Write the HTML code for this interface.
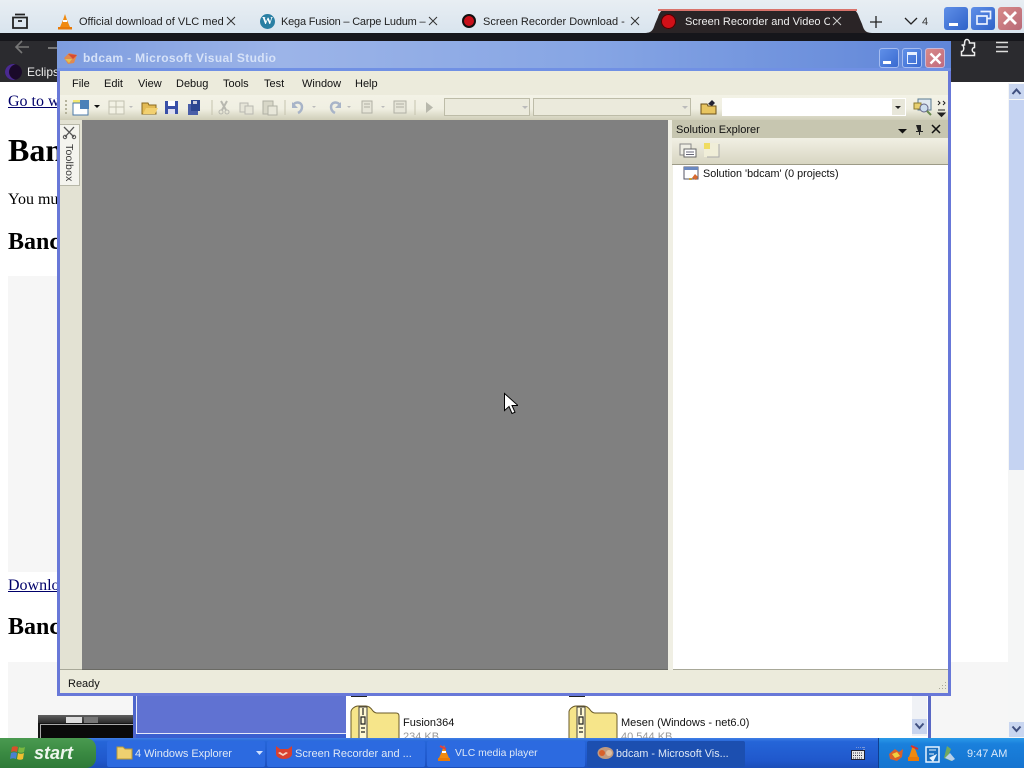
<!DOCTYPE html>
<html><head><meta charset="utf-8"><style>
html,body{margin:0;padding:0;background:#fff;}
#r{position:relative;width:1024px;height:768px;overflow:hidden;background:#fff;font-family:"Liberation Sans",sans-serif;}
.a{position:absolute;}
.t{position:absolute;white-space:nowrap;}
.s{font-family:"Liberation Serif",serif;color:#000;}
.tab{font-size:11px;color:#222;top:16px;overflow:hidden;width:145px;}
.m{font-size:11px;color:#111;top:78px;}
.tb{font-size:11px;color:#dfe8f5;top:748px;}
.x{position:absolute;}
</style></head><body><div id="r">

<!-- browser tab strip -->
<div class="a" style="left:0;top:0;width:1024px;height:33px;background:linear-gradient(#e8eef3,#d9e4ee);"></div>
<svg class="x" style="left:11px;top:12px" width="18" height="18" viewBox="0 0 18 18"><path d="M2 5.500h14v10.500H2zM4 2.500h10M7 9h4" fill="none" stroke="#222" stroke-width="1.800"/></svg>
<svg class="x" style="left:57px;top:13px" width="16" height="17" viewBox="0 0 16 17"><path d="M8 1l2 6 3 7H3l3-7z" fill="#f08a10"/><path d="M6 7h4v2H6z" fill="#fff"/><path d="M1 14h14v2.500H1z" fill="#e87a08"/></svg>
<div class="t tab" style="left:79px">Official download of VLC med</div>
<svg class="x" style="left:226px;top:16px" width="10" height="10"><path d="M1 1l8 8M9 1l-8 8" stroke="#333" stroke-width="1"/></svg>
<div class="a" style="left:260px;top:14px;width:15px;height:15px;border-radius:50%;background:#2a7fa3;color:#fff;font:bold 11px/15px 'Liberation Serif',serif;text-align:center;">W</div>
<div class="t tab" style="left:281px;letter-spacing:-.2px">Kega Fusion – Carpe Ludum –</div>
<svg class="x" style="left:428px;top:16px" width="10" height="10"><path d="M1 1l8 8M9 1l-8 8" stroke="#333" stroke-width="1"/></svg>
<div class="a" style="left:462px;top:14px;width:14px;height:14px;border-radius:50%;background:#c8101a;border:2px solid #111;box-sizing:border-box;"></div>
<div class="t tab" style="left:483px">Screen Recorder Download - E</div>
<svg class="x" style="left:630px;top:16px" width="10" height="10"><path d="M1 1l8 8M9 1l-8 8" stroke="#333" stroke-width="1"/></svg>

<!-- active tab -->
<svg class="x" style="left:644px;top:8px" width="228" height="26"><path d="M0 25c8 0 9-3 11-9l3-7c1-3 3-8 8-8h185c5 0 7 5 8 8l3 7c2 6 3 9 11 9z" fill="#2a2426"/><path d="M14 2h199" stroke="#d9736b" stroke-width="2"/></svg>
<div class="a" style="left:661px;top:14px;width:15px;height:15px;border-radius:50%;background:#d01018;box-shadow:inset 0 0 0 1px #400;"></div>
<div class="t" style="left:685px;top:16px;font-size:11px;color:#eee;width:145px;overflow:hidden;">Screen Recorder and Video Capture</div>
<svg class="x" style="left:832px;top:16px" width="10" height="10"><path d="M1 1l8 8M9 1l-8 8" stroke="#ccc" stroke-width="1"/></svg>
<svg class="x" style="left:869px;top:15px" width="14" height="14"><path d="M7 1v12M1 7h12" stroke="#222" stroke-width="1.300"/></svg>
<svg class="x" style="left:904px;top:16px" width="14" height="10"><path d="M1 2l6 6 6-6" fill="none" stroke="#222" stroke-width="1.300"/></svg>
<div class="t" style="left:922px;top:16px;font-size:11px;color:#333;">4</div>

<!-- outer window controls -->
<div class="a" style="left:944px;top:7px;width:24px;height:23px;background:linear-gradient(135deg,#5f8fe8,#2f62c8);border-radius:3px;"></div>
<div class="a" style="left:949px;top:23px;width:9px;height:3px;background:#fff;"></div>
<div class="a" style="left:971px;top:7px;width:24px;height:23px;background:linear-gradient(135deg,#5f8fe8,#2f62c8);border-radius:3px;"></div>
<svg class="x" style="left:975px;top:10px" width="17" height="16"><path d="M5.500 1.500h10v7h-3M2 6h10v8H2z" fill="none" stroke="#e8f0ff" stroke-width="1.700"/></svg>
<div class="a" style="left:998px;top:7px;width:24px;height:23px;background:linear-gradient(135deg,#d88a88,#b86a78);border-radius:3px;"></div>
<svg class="x" style="left:1002px;top:10px" width="16" height="16"><path d="M2 2l12 12M14 2L2 14" stroke="#fff" stroke-width="2.800"/></svg>

<!-- browser toolbar -->
<div class="a" style="left:0;top:33px;width:1024px;height:9px;background:#16161b;"></div>
<div class="a" style="left:0;top:41px;width:1024px;height:41px;background:#2b2b2f;"></div>
<svg class="x" style="left:14px;top:39px" width="16" height="16"><path d="M15 8H2M8 2L2 8l6 6" fill="none" stroke="#777" stroke-width="1.600"/></svg>
<div class="a" style="left:48px;top:47px;width:9px;height:2px;background:#777;"></div>
<div class="a" style="left:5px;top:64px;width:17px;height:16px;border-radius:50%;background:#1a0a2a;box-shadow:inset 4px 0 0 #4a2a90;"></div>
<div class="t" style="left:27px;top:65px;font-size:12px;color:#eee;">Eclips</div>
<svg class="x" style="left:960px;top:38px" width="17" height="19"><path d="M1.500 7h3c0-5 1-5.500 2.500-5.500S9.500 3 9.500 5h5v4.500c-3 0-3 5 0 5v3H1.500v-4c3 0 3-6.500 0-6.500z" fill="none" stroke="#eee" stroke-width="1.500"/></svg>
<svg class="x" style="left:995px;top:41px" width="14" height="12"><path d="M1 1.500h12M1 6h12M1 10.500h12" stroke="#ddd" stroke-width="1.400"/></svg>

<!-- page content -->
<div class="t s" style="left:8px;top:93px;font-size:16px;text-decoration:underline;color:#00006a;">Go to w</div>
<div class="t s" style="left:8px;top:132px;font-size:32px;font-weight:bold;">Ban</div>
<div class="t s" style="left:8px;top:191px;font-size:16px;">You mu</div>
<div class="t s" style="left:8px;top:229px;font-size:24px;font-weight:bold;">Banc</div>
<div class="a" style="left:8px;top:276px;width:50px;height:296px;background:#f6f6f6;"></div>
<div class="t s" style="left:8px;top:577px;font-size:16px;text-decoration:underline;color:#00006a;">Downlo</div>
<div class="t s" style="left:8px;top:614px;font-size:24px;font-weight:bold;">Banc</div>
<div class="a" style="left:8px;top:662px;width:1000px;height:78px;background:#f6f6f6;"></div>

<!-- thumbnail -->
<div class="a" style="left:38px;top:715px;width:95px;height:26px;background:#151515;"></div>
<div class="a" style="left:38px;top:715px;width:95px;height:8px;background:linear-gradient(#606060,#2a2a2a);"></div>
<div class="a" style="left:66px;top:717px;width:16px;height:6px;background:#ddd;"></div>
<div class="a" style="left:84px;top:717px;width:14px;height:6px;background:#777;"></div>
<div class="a" style="left:40px;top:724px;width:93px;height:16px;background:#0a0a0a;border-left:1px solid #aaa;border-top:1px solid #aaa;"></div>

<!-- explorer window behind -->
<div class="a" style="left:133px;top:696px;width:3px;height:45px;background:#4e66cc;"></div>
<div class="a" style="left:136px;top:696px;width:210px;height:37px;background:#6072d2;border-bottom:1px solid #e6e9fa;border-left:1px solid #e6e9fa;box-sizing:content-box;"></div>
<div class="a" style="left:136px;top:734px;width:210px;height:7px;background:#3a5fd0;"></div>
<div class="a" style="left:346px;top:696px;width:584px;height:45px;background:#fff;"></div>
<div class="a" style="left:912px;top:696px;width:15px;height:40px;background:#f0f2f6;"></div>
<div class="a" style="left:912px;top:719px;width:15px;height:15px;background:#c8d4ee;"></div>
<svg class="x" style="left:914px;top:722px" width="11" height="9"><path d="M1.500 1.500L5.500 6l4-4.500" fill="none" stroke="#405080" stroke-width="2"/></svg>
<div class="a" style="left:928px;top:696px;width:3px;height:45px;background:#5a68c4;"></div>
<div class="a" style="left:351px;top:696px;width:16px;height:1px;background:#222;"></div>
<div class="a" style="left:569px;top:696px;width:16px;height:1px;background:#222;"></div>

<!-- folders -->
<svg class="x" style="left:350px;top:705px" width="50" height="34"><path d="M1 34V7c0-3 4-6 7-6h8c3 0 5 2 7 5 1 1 2 2 4 2h19c2 0 3 1 3 3v23z" fill="#f6e58a" stroke="#6a5a28"/><path d="M9 2h8v32H9z" fill="#fff8d0" stroke="#444" stroke-width="1"/><path d="M13 3v7M11 12h4v7h-4zM11 23h4M11 27h4" fill="none" stroke="#222" stroke-width="1.200"/></svg>
<svg class="x" style="left:568px;top:705px" width="50" height="34"><path d="M1 34V7c0-3 4-6 7-6h8c3 0 5 2 7 5 1 1 2 2 4 2h19c2 0 3 1 3 3v23z" fill="#f6e58a" stroke="#6a5a28"/><path d="M9 2h8v32H9z" fill="#fff8d0" stroke="#444" stroke-width="1"/><path d="M13 3v7M11 12h4v7h-4zM11 23h4M11 27h4" fill="none" stroke="#222" stroke-width="1.200"/></svg>
<div class="t" style="left:403px;top:717px;font-size:11px;color:#111;">Fusion364</div>
<div class="t" style="left:403px;top:731px;font-size:11px;color:#999;">234 KB</div>
<div class="t" style="left:621px;top:717px;font-size:11px;color:#111;">Mesen (Windows - net6.0)</div>
<div class="t" style="left:621px;top:731px;font-size:11px;color:#999;">40,544 KB</div>

<!-- browser scrollbar -->
<div class="a" style="left:1008px;top:83px;width:16px;height:657px;background:#f5f6f6;"></div>
<div class="a" style="left:1009px;top:84px;width:15px;height:15px;background:#c9d6f0;"></div>
<svg class="x" style="left:1011px;top:87px" width="11" height="9"><path d="M1.500 7L5.500 2.500 9.500 7" fill="none" stroke="#405080" stroke-width="2"/></svg>
<div class="a" style="left:1009px;top:100px;width:15px;height:370px;background:#c5d3f2;"></div>
<div class="a" style="left:1009px;top:722px;width:15px;height:15px;background:#c9d6f0;"></div>
<svg class="x" style="left:1011px;top:725px" width="11" height="9"><path d="M1.500 1.500L5.500 6l4-4.500" fill="none" stroke="#405080" stroke-width="2"/></svg>

<!-- VS window -->
<div class="a" style="left:57px;top:41px;width:894px;height:655px;background:#6878d8;"></div>
<div class="a" style="left:57px;top:41px;width:894px;height:30px;background:linear-gradient(90deg,#7d9cdf 0%,#9cb4e8 25%,#86a5e4 60%,#5f85d8 100%);"></div>
<div class="a" style="left:57px;top:68px;width:894px;height:3px;background:#7090e4;"></div>
<svg class="x" style="left:63px;top:51px" width="16" height="14"><path d="M1 7l5-5 8 2-3 8-6 1z" fill="#e08a50"/><path d="M5 3l9 1-4 4z" fill="#d84a30"/><path d="M2 8l4 4 3-4z" fill="#e0c050"/></svg>
<div class="t" style="left:83px;top:51px;font-size:12px;font-weight:bold;color:#d6e2f8;letter-spacing:.35px;">bdcam - Microsoft Visual Studio</div>
<div class="a" style="left:879px;top:48px;width:20px;height:20px;background:linear-gradient(135deg,#5f8fe8,#3a6ad0);border-radius:3px;border:1px solid #a5bcf0;box-sizing:border-box;"></div>
<div class="a" style="left:883px;top:61px;width:8px;height:3px;background:#fff;"></div>
<div class="a" style="left:902px;top:48px;width:20px;height:20px;background:linear-gradient(135deg,#5f8fe8,#3a6ad0);border-radius:3px;border:1px solid #a5bcf0;box-sizing:border-box;"></div>
<div class="a" style="left:907px;top:52px;width:8px;height:8px;border:1.500px solid #e8f0ff;border-top-width:3px;"></div>
<div class="a" style="left:925px;top:48px;width:20px;height:20px;background:linear-gradient(135deg,#d88a88,#c06a80);border-radius:3px;border:1px solid #c8b8d8;box-sizing:border-box;"></div>
<svg class="x" style="left:929px;top:52px" width="13" height="13"><path d="M1.500 1.500l10 10M11.500 1.500l-10 10" stroke="#fff" stroke-width="2.400"/></svg>

<!-- client -->
<div class="a" style="left:60px;top:71px;width:888px;height:622px;background:#ecebdc;"></div>
<div class="m t" style="left:72px">File</div>
<div class="m t" style="left:104px">Edit</div>
<div class="m t" style="left:138px">View</div>
<div class="m t" style="left:176px">Debug</div>
<div class="m t" style="left:223px">Tools</div>
<div class="m t" style="left:264px">Test</div>
<div class="m t" style="left:302px">Window</div>
<div class="m t" style="left:355px">Help</div>

<!-- toolbar -->
<div class="a" style="left:60px;top:95px;width:888px;height:25px;background:linear-gradient(#f3f2e6,#f0efe2 55%,#cfcdb8);"></div>
<svg class="x" style="left:64px;top:97px" width="380" height="20">
<path d="M2 3v15" stroke="#b5b39c" stroke-width="2" stroke-dasharray="2 2"/>
<rect x="9" y="3" width="7" height="6" fill="#f4e870"/><rect x="9" y="6" width="15" height="12" fill="#fff" stroke="#4a78a8"/><rect x="16" y="3" width="9" height="9" fill="#4a80b8"/>
<path d="M30 8l3 3 3-3z" fill="#111"/>
<rect x="45" y="4" width="15" height="13" fill="#f2f1e4" stroke="#c2c1b0"/><path d="M45 10h15M52 4v13" stroke="#c2c1b0"/>
<path d="M65 9l2 2 2-2z" fill="#bbb"/>
<path d="M78 17V6h6l1 2h7v9z" fill="#e3bb55" stroke="#8a6a20"/><path d="M79 17l3-6h12l-3 6z" fill="#f2d070"/>
<rect x="101" y="4" width="13" height="13" fill="#3a50a8"/><rect x="104" y="4" width="7" height="5" fill="#fff"/><rect x="104" y="12" width="7" height="5" fill="#dde"/>
<rect x="124" y="7" width="10" height="11" fill="#4a5ea8"/><rect x="127" y="3" width="9" height="11" fill="#2e4690"/><rect x="129" y="4" width="4" height="3" fill="#ccd"/>
<path d="M148 3v15" stroke="#c5c3ae"/>
<path d="M157 4l5 9M163 4l-5 9" stroke="#b8b8b0" stroke-width="2"/><circle cx="157" cy="15" r="2" fill="none" stroke="#b8b8b0"/><circle cx="163" cy="15" r="2" fill="none" stroke="#b8b8b0"/>
<rect x="176" y="6" width="8" height="9" fill="#e6e5d8" stroke="#b8b8b0"/><rect x="181" y="9" width="8" height="8" fill="#e6e5d8" stroke="#b8b8b0"/>
<rect x="199" y="4" width="10" height="13" fill="#d8d7c8" stroke="#b0b0a4"/><rect x="204" y="9" width="9" height="9" fill="#e8e7da" stroke="#b0b0a4"/>
<path d="M221 3v15" stroke="#c5c3ae"/>
<path d="M229 8c3-4 9-3 9 2 0 3-2 5-4 6" fill="none" stroke="#a8b4c8" stroke-width="2.500"/><path d="M228 5v6h6z" fill="#a8b4c8"/>
<path d="M248 9l2 2 2-2z" fill="#bbb"/>
<path d="M276 8c-3-4-9-3-9 2 0 3 2 5 4 6" fill="none" stroke="#a8b4c8" stroke-width="2.500"/><path d="M277 5v6h-6z" fill="#a8b4c8"/>
<path d="M283 9l2 2 2-2z" fill="#bbb"/>
<rect x="298" y="4" width="10" height="12" fill="#e6e5d8" stroke="#b0b0a4"/><path d="M300 7h6M300 10h6" stroke="#b0b0a4"/>
<path d="M317 9l2 2 2-2z" fill="#bbb"/>
<rect x="330" y="4" width="12" height="12" fill="#e6e5d8" stroke="#b0b0a4"/><path d="M332 7h8M332 10h8" stroke="#b0b0a4"/>
<path d="M351 3v15" stroke="#c5c3ae"/>
<path d="M362 5v11l7-5.500z" fill="#b8b8ac"/>
</svg>
<div class="a" style="left:444px;top:98px;width:86px;height:18px;background:#ebeadc;border:1px solid #bdbca8;box-sizing:border-box;"></div>
<div class="a" style="left:533px;top:98px;width:158px;height:18px;background:#ebeadc;border:1px solid #bdbca8;box-sizing:border-box;"></div>
<svg class="x" style="left:521px;top:105px" width="8" height="6"><path d="M1 1l3 3 3-3z" fill="#bbb"/></svg>
<svg class="x" style="left:681px;top:105px" width="8" height="6"><path d="M1 1l3 3 3-3z" fill="#bbb"/></svg>
<svg class="x" style="left:700px;top:98px" width="18" height="18"><path d="M1 16V6h6l1 2h8v8z" fill="#e8c560" stroke="#6a5018"/><path d="M8 6l4-4 3 3-3 3z" fill="#223"/></svg>
<div class="a" style="left:722px;top:98px;width:184px;height:18px;background:#fff;"></div>
<div class="a" style="left:892px;top:99px;width:13px;height:16px;background:#e8e7da;"></div>
<svg class="x" style="left:894px;top:105px" width="8" height="6"><path d="M1 1l3 3 3-3z" fill="#222"/></svg>
<svg class="x" style="left:913px;top:98px" width="20" height="18"><rect x="5" y="1" width="13" height="11" fill="#dfe8f0" stroke="#5a7a90"/><rect x="1" y="5" width="7" height="6" fill="#e8d070" stroke="#8a7a30"/><circle cx="11" cy="10" r="4" fill="#cde" stroke="#668"/><path d="M14 13l4 4" stroke="#6a8a50" stroke-width="2"/></svg>
<svg class="x" style="left:937px;top:99px" width="10" height="20"><path d="M1 2l2 2-2 2M6 2l2 2-2 2" fill="none" stroke="#222"/><path d="M1 11h7M1 14l3.500 3.500L8 14z" fill="#222" stroke="#222"/></svg>

<!-- MDI gray -->
<div class="a" style="left:82px;top:120px;width:586px;height:550px;background:#808080;"></div>
<div class="a" style="left:60px;top:120px;width:22px;height:550px;background:#e3e2d3;"></div>
<div class="a" style="left:60px;top:124px;width:20px;height:62px;background:#f4f4ee;border:1px solid #b8b8a8;border-left:none;box-sizing:border-box;"></div>
<svg class="x" style="left:62px;top:125px" width="15" height="15"><path d="M2 2l10 10M12 2L3 12" stroke="#555" stroke-width="1.300"/><circle cx="3" cy="12" r="1.700" fill="none" stroke="#555"/><circle cx="12" cy="12" r="1.700" fill="none" stroke="#555"/></svg>
<div class="t" style="left:75px;top:144px;font-size:10.500px;color:#333;letter-spacing:.2px;transform-origin:0 0;transform:rotate(90deg);">Toolbox</div>
<div class="a" style="left:60px;top:669px;width:888px;height:24px;background:#ecebdc;border-top:1px solid #a8a898;box-sizing:border-box;"></div>
<div class="a" style="left:82px;top:669px;width:586px;height:1px;background:#6a6a64;"></div>
<div class="t" style="left:68px;top:678px;font-size:11px;color:#111;">Ready</div>
<svg class="x" style="left:935px;top:680px" width="12" height="12"><path d="M10 2h1v1h-1zM7 5h1v1H7zM10 5h1v1h-1zM4 8h1v1H4zM7 8h1v1H7zM10 8h1v1h-1z" fill="#a8a898"/></svg>

<!-- solution explorer -->
<div class="a" style="left:668px;top:120px;width:5px;height:550px;background:#f0efe4;"></div>
<div class="a" style="left:672px;top:120px;width:276px;height:18px;background:#c7c6b0;"></div>
<div class="t" style="left:676px;top:124px;font-size:11px;color:#111;">Solution Explorer</div>
<svg class="x" style="left:897px;top:124px" width="48" height="12"><path d="M1 5h9L5.500 9.500z" fill="#111"/><path d="M19 1h5v6h2v1h-3v3h-1V8h-3V7h2z" fill="#222" stroke="none"/><path d="M35 1l8 8M43 1l-8 8" stroke="#111" stroke-width="1.500"/></svg>
<div class="a" style="left:672px;top:138px;width:276px;height:27px;background:linear-gradient(#f1f0e4,#d8d6c2);border-bottom:1px solid #9c9a86;box-sizing:border-box;"></div>
<svg class="x" style="left:679px;top:142px" width="42" height="17"><rect x="1" y="2" width="11" height="11" fill="#efeee4" stroke="#888"/><rect x="5" y="7" width="12" height="8" fill="#fff" stroke="#666"/><path d="M7 10h8M7 12.500h8" stroke="#667"/><rect x="25" y="1" width="15" height="14" fill="#f0eed8"/><rect x="25" y="1" width="6" height="6" fill="#f0dc60"/><path d="M40 2v13H28" fill="none" stroke="#aaa"/></svg>
<div class="a" style="left:673px;top:165px;width:275px;height:504px;background:#fff;"></div>
<svg class="x" style="left:683px;top:166px" width="17" height="15"><rect x="1" y="1" width="14" height="12" fill="#fff" stroke="#556"/><rect x="1" y="1" width="14" height="3" fill="#6a88c0"/><path d="M9 12l3-4 3 3-2 3z" fill="#d86a30"/><path d="M6 12h3v2H6z" fill="#c8a040"/></svg>
<div class="t" style="left:703px;top:168px;font-size:10.800px;color:#111;">Solution 'bdcam' (0 projects)</div>

<!-- taskbar -->
<div class="a" style="left:0;top:738px;width:1024px;height:30px;background:linear-gradient(#3f7ee6 0%,#2565d8 12%,#2058cc 75%,#1c4eb8 100%);"></div>
<div class="a" style="left:0;top:738px;width:96px;height:30px;background:linear-gradient(#4a9a50,#3a8a42 50%,#2e7a38);border-radius:0 10px 10px 0;"></div>
<svg class="x" style="left:10px;top:743px" width="19" height="19"><path d="M2 4c2-1 4-1 6 0l-1 5c-2-1-4-1-6 0z" fill="#d8502a"/><path d="M9 4c2 1 4 1 6 0l-1 5c-2 1-4 1-6 0z" fill="#7ab840"/><path d="M1 10c2-1 4-1 6 0l-1 6c-2-1-4-1-6 0z" fill="#4a80d0"/><path d="M8 10c2 1 4 1 6 0l-1 6c-2 1-4 1-6 0z" fill="#f0c030"/></svg>
<div class="t" style="left:34px;top:743px;font:italic bold 18px 'Liberation Sans',sans-serif;color:#eef6ee;">start</div>

<div class="a" style="left:107px;top:741px;width:158px;height:26px;background:#2c6ae0;border-radius:2px;"></div>
<div class="a" style="left:267px;top:741px;width:158px;height:26px;background:#2c6ae0;border-radius:2px;"></div>
<div class="a" style="left:427px;top:741px;width:158px;height:26px;background:#2c6ae0;border-radius:2px;"></div>
<div class="a" style="left:587px;top:741px;width:158px;height:26px;background:#1c4fb0;border-radius:2px;"></div>

<svg class="x" style="left:116px;top:745px" width="17" height="15"><path d="M1 14V2h6l2 2h7v10z" fill="#efd070" stroke="#b89838"/></svg>
<div class="t tb" style="left:135px;letter-spacing:-.05px">4 Windows Explorer</div>
<svg class="x" style="left:256px;top:751px" width="8" height="5"><path d="M0 0h7L3.500 4z" fill="#cfe0ff"/></svg>
<svg class="x" style="left:275px;top:745px" width="18" height="15"><path d="M1 1l4 3h8l4-3v8c0 3-4 5-8 5s-8-2-8-5z" fill="#d84030"/><path d="M5 7l3 2 3-2 2 1-5 3-5-3z" fill="#f4d0c0"/></svg>
<div class="t tb" style="left:295px">Screen Recorder and ...</div>
<svg class="x" style="left:437px;top:744px" width="14" height="18"><path d="M7 1l2 6 3 7H2l3-7z" fill="#f08a10"/><path d="M5 7h4v2H5z" fill="#fff"/><path d="M1 14h12v3H1z" fill="#e87a08"/><path d="M3 2l6 3" stroke="#e04040" stroke-width="2"/></svg>
<div class="t tb" style="left:455px;font-size:10.400px;">VLC media player</div>
<svg class="x" style="left:597px;top:746px" width="17" height="14"><ellipse cx="8.500" cy="7" rx="8" ry="6" fill="#c09a80"/><circle cx="5" cy="7" r="3" fill="#d8602a"/><circle cx="12" cy="7" r="3" fill="#e0c0a0"/></svg>
<div class="t tb" style="left:616px;font-size:10.800px">bdcam - Microsoft Vis...</div>

<svg class="x" style="left:851px;top:747px" width="14" height="13"><rect x="0.500" y="3.500" width="13" height="9" fill="#e8e8e8" stroke="#223"/><path d="M2 6h10M2 8.500h10M2 11h10" stroke="#334" stroke-dasharray="1 1"/><path d="M5 0h8v3" fill="none" stroke="#ccd" stroke-dasharray="1 1"/></svg>

<!-- tray -->
<div class="a" style="left:878px;top:738px;width:146px;height:30px;background:linear-gradient(#2a9ae8 0%,#1a80dc 20%,#1574d0 100%);border-left:1px solid #103f90;box-sizing:border-box;"></div>
<svg class="x" style="left:887px;top:744px" width="72" height="20"><path d="M2 10l6-5 4 3 4-3-1 8-5 4-7-2z" fill="#d8602a"/><path d="M5 10l5-2 3 4-5 2z" fill="#f0d040"/><path d="M26 1l3 6 2 6h-9l2-6z" fill="#f08a10"/><path d="M24 2l7 3" stroke="#d83030" stroke-width="2"/><path d="M21 13h11v4H21z" fill="#e87a08"/><rect x="39" y="3" width="13" height="15" fill="#1a70c0" stroke="#e8f4ff" stroke-width="1.500"/><path d="M42 6h7M42 10h5M43 14l6-3-3 6z" stroke="#e8f4ff" fill="#e8f4ff"/><path d="M60 2l4 3-2 5 5 4-3 3-7-3z" fill="#70a860"/><path d="M58 14l5-5 5 6-3 2z" fill="#b8d0e8"/></svg>
<div class="t" style="left:967px;top:748px;font-size:11px;color:#dce9fa;">9:47 AM</div>

<!-- cursor -->
<svg class="x" style="left:503px;top:392px" width="15" height="24"><path d="M1.500 1.500v17l4.500-4 3 7 3-1.300-3-6.700h6z" fill="#fff" stroke="#000"/></svg>

</div></body></html>
